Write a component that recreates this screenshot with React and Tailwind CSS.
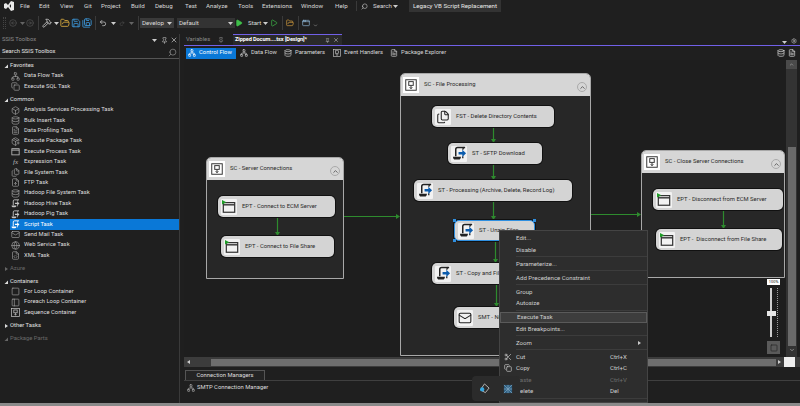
import React from "react";
import {
  AppWindow, Box, ChevronDown, ChevronUp, CircleArrowLeft, CircleArrowRight, Copy, Database, FileCode, FileText, Files,
  FileUp, FolderOpen, Globe, Hammer, Mail, Network, PackagePlus, PanelLeft, Pin, Play, Redo2, Save, SaveAll, Scissors,
  Search, Settings, Square, Undo2, X,
} from "lucide-react";

const MENU = [
  ["File", "w-[19px]"], ["Edit", "w-[21px]"], ["View", "w-[24px]"], ["Git", "w-[17px]"], ["Project", "w-[30px]"],
  ["Build", "w-[24px]"], ["Debug", "w-[30px]"], ["Test", "w-[21px]"], ["Analyze", "w-[32px]"], ["Tools", "w-[24px]"],
  ["Extensions", "w-[39px]"], ["Window", "w-[34px]"], ["Help", "w-[21px]"],
];

const Caret = ({ open = true, dim = false }) => (
  <svg width="6" height="6" viewBox="0 0 6 6" className="shrink-0">
    {open ? (
      <path d="M5 1.5V5H1.5z" fill={dim ? "#666" : "#ddd"} />
    ) : (
      <path d="M2 1l3 2-3 2z" fill={dim ? "#666" : "#ddd"} />
    )}
  </svg>
);

const Drop = () => (
  <svg width="5" height="4" viewBox="0 0 5 4" className="shrink-0"><path d="M0 1h5L2.5 4z" fill="#ccc" /></svg>
);

// fixed width slot so the toolbar icons keep their spacing
const Cell = ({ className, children }) => <div className={`flex shrink-0 items-center justify-center ${className}`}>{children}</div>;
const Rule = () => <div className="h-[14px] w-px bg-[#3a3a3a]" />;

// small versions of the SSIS task glyphs
const ScriptGlyph = ({ size = 9, color = "#c4c4c4", arrow = null }) => (
  <svg width={size} height={size} viewBox="0 0 16 16" fill="none" className="shrink-0">
    <path d="M4 11V3.5C4 2 5 1.5 6 1.5h8" stroke={color} strokeWidth="1.6" />
    <path d="M13 1.5C12 2 11.5 3 11.5 4" stroke={color} strokeWidth="1.4" />
    <path d="M1 11.5h8.5c0 2-1 3-2 3H3c-1 0-2-1-2-3z" fill={color} />
    <path d="M11.5 11v2" stroke={color} strokeWidth="1.4" />
    <path d="M7 6.5h4V4l4 3.8-4 3.8V9H7z" fill={arrow || color} />
  </svg>
);

const WindowGlyph = ({ size = 9, flag = false }) => (
  <svg width={size} height={size} viewBox="0 0 16 16" fill="none" className="shrink-0">
    <rect x="1.5" y="3" width="13" height="11" fill="none" stroke={flag ? "#333" : "#c4c4c4"} strokeWidth="1.4" />
    <path d="M1.5 5.5h13" stroke={flag ? "#333" : "#c4c4c4"} strokeWidth="1.6" />
    {flag && <path d="M0 0l5 2.5L0 5z" fill="#1f9d28" />}
  </svg>
);

const SeqGlyph = ({ size = 9, color = "#c4c4c4" }) => (
  <svg width={size} height={size} viewBox="0 0 16 16" fill="none" className="shrink-0">
    <rect x="1" y="1" width="14" height="14" stroke={color} strokeWidth="1.3" />
    <rect x="5" y="3.5" width="6" height="5" stroke={color} strokeWidth="1.3" />
    <path d="M8 9v3.5M6.3 11l1.7 2 1.7-2" stroke={color} strokeWidth="1.3" />
  </svg>
);

const FxGlyph = () => <span className="w-[9px] shrink-0 text-center font-['Liberation_Serif',serif] text-[7px] italic text-[#bbb]">fx</span>;

const li = (Icon) => () => <Icon size={9} color="#b4b4b4" strokeWidth={1.5} className="shrink-0" />;

const TOOLBOX = [
  { name: "Favorites", open: true, items: [["Data Flow Task", li(Network)], ["Execute SQL Task", li(Copy)]] },
  {
    name: "Common",
    open: true,
    items: [
      ["Analysis Services Processing Task", li(Box)],
      ["Bulk Insert Task", li(Database)],
      ["Data Profiling Task", li(FileText)],
      ["Execute Package Task", li(PackagePlus)],
      ["Execute Process Task", () => <WindowGlyph />],
      ["Expression Task", FxGlyph],
      ["File System Task", li(Files)],
      ["FTP Task", li(FileUp)],
      ["Hadoop File System Task", li(Database)],
      ["Hadoop Hive Task", () => <ScriptGlyph />],
      ["Hadoop Pig Task", () => <ScriptGlyph />],
      ["Script Task", () => <ScriptGlyph color="#fff" />],
      ["Send Mail Task", li(Mail)],
      ["Web Service Task", li(Globe)],
      ["XML Task", li(FileCode)],
    ],
  },
  { name: "Azure", open: false, dim: true, items: [] },
  {
    name: "Containers",
    open: true,
    items: [["For Loop Container", li(Square)], ["Foreach Loop Container", li(PanelLeft)], ["Sequence Container", () => <SeqGlyph />]],
  },
  { name: "Other Tasks", open: false, items: [] },
  { name: "Package Parts", open: true, dim: true, items: [] },
];

const Toolbox = () => (
  <div className="flex h-full w-[180px] shrink-0 flex-col border-r border-[#3a3a3a] text-[5.85px]">
    <div className="flex h-[12px] shrink-0 items-center pl-[2px] pr-[1px] text-[#8a8a8a]">
      <span className="flex-1">SSIS Toolbox</span>
      <Drop />
      <Pin size={7} className="ml-[4px]" color="#ccc" />
      <X size={8} className="ml-[2px]" color="#ccc" />
    </div>
    <div className="flex h-[13px] shrink-0 items-center border-b border-[#555] pl-[2px] pr-[2px] text-[#e4e4e4]">
      <span className="flex-1">Search SSIS Toolbox</span>
      <Search size={9} color="#888" className="-scale-x-100" />
    </div>
    <div className="pt-[1.8px]">
      {TOOLBOX.map((g, i) => (
        <div key={g.name} className={i === 0 ? "" : "mt-[2.6px]"}>
          <div className={`flex h-[10.4px] items-center gap-[1px] pl-[3px] ${g.dim ? "text-[#6a6a6a]" : "text-[#e0e0e0]"}`}>
            <Caret open={g.open} dim={g.dim} />
            <span>{g.name}</span>
          </div>
          {g.items.map(([label, Icon]) => (
            <div
              key={label}
              className={`ml-[10px] flex h-[10.4px] items-center gap-[4px] pl-[1px] ${label === "Script Task" ? "bg-[#0a78d7] text-white" : "text-[#dedede]"}`}
            >
              <span className="flex w-[9px] shrink-0 justify-center"><Icon /></span>
              <span>{label}</span>
            </div>
          ))}
        </div>
      ))}
    </div>
  </div>
);

const Container = ({ pos, title }) => (
  <div className={`absolute flex flex-col overflow-hidden rounded-t-[5px] border border-[#a8a8a8] bg-[#272727] ${pos}`}>
    <div className="flex h-[22px] shrink-0 items-center bg-[#d6d6d6] pl-[2px] pr-[3px] text-[#2a2a2a]">
      <span className="flex h-[16px] w-[16px] shrink-0 items-center justify-center bg-white"><SeqGlyph size={12} color="#333" /></span>
      <span className="ml-[5px] flex-1">{title}</span>
      <span className="mt-[4px] flex h-[10px] w-[10px] items-center justify-center rounded-full border border-[#aaa]">
        <ChevronUp size={7} color="#555" strokeWidth={3} />
      </span>
    </div>
  </div>
);

const NODE_ICON = {
  window: <WindowGlyph size={14} flag />,
  script: <ScriptGlyph size={15} color="#222" arrow="#0b5cad" />,
  files: <Files size={14} color="#222" strokeWidth={1.8} />,
  mail: <Mail size={14} color="#222" strokeWidth={1.8} />,
};

const NODES = [
  { pos: "left-[34px] top-[136px] w-[117px]", icon: "window", text: "EPT - Connect to ECM Server" },
  { pos: "left-[37px] top-[176px] w-[113px]", icon: "window", text: "EPT - Connect to File Share" },
  { pos: "left-[248px] top-[46px] w-[122px]", icon: "files", text: "FST - Delete Directory Contents" },
  { pos: "left-[264px] top-[83px] w-[94px]", icon: "script", text: "ST - SFTP Download" },
  { pos: "left-[230px] top-[120px] w-[158px]", icon: "script", text: "ST - Processing (Archive, Delete, Record Log)" },
  { pos: "left-[270px] top-[160px] w-[81px]", icon: "script", text: "ST - Unzip Files", selected: true },
  { pos: "left-[248px] top-[203px] w-[110px]", icon: "script", text: "ST - Copy and File" },
  { pos: "left-[270px] top-[247px] w-[100px]", icon: "mail", text: "SMT - Notify" },
  { pos: "left-[469px] top-[129px] w-[130px]", icon: "window", text: "EPT - Disconnect from ECM Server" },
  { pos: "left-[472px] top-[169px] w-[126px]", icon: "window", text: "EPT -  Disconnect from File Share" },
];

const Node = ({ pos, icon, text, selected }) => (
  <div
    className={`absolute flex h-[21px] items-center gap-[5px] whitespace-pre rounded-[5px] bg-[#d4d4d4] pl-[3px] text-[#2a2a2a] shadow-[0_0_0_1px_#111] ${pos} ${selected ? "border border-[#2f8fe0]" : ""}`}
  >
    <span className="flex h-[16px] w-[16px] shrink-0 items-center justify-center rounded-[1px] bg-[#f2f2f2]">{NODE_ICON[icon]}</span>
    <span>{text}</span>
    {selected && (
      <>
        <span className="absolute -left-[2px] -top-[2px] h-[3px] w-[3px] bg-[#2f8fe0]" />
        <span className="absolute -right-[2px] -top-[2px] h-[3px] w-[3px] bg-[#2f8fe0]" />
        <span className="absolute -bottom-[2px] -left-[2px] h-[3px] w-[3px] bg-[#2f8fe0]" />
        <span className="absolute -bottom-[2px] -right-[2px] h-[3px] w-[3px] bg-[#2f8fe0]" />
      </>
    )}
  </div>
);

const Arrows = () => {
  const stroke = "#2e8b2e";
  const down = [[93, 157, 176], [309, 68, 83], [309, 104, 120], [309, 141, 160], [311, 181, 203], [312, 224, 247], [539, 150, 169]];
  const right = [[160, 216, 156], [407, 457, 154]];
  return (
    <svg className="absolute inset-0" width="602" height="297">
      {down.map(([x, a, b]) => (
        <g key={`${x}-${a}`}>
          <path d={`M${x + 0.5} ${a}V${b - 3}`} stroke={stroke} strokeWidth="1.2" />
          <path d={`M${x - 2} ${b - 4}h5l-2.5 4z`} fill={stroke} />
        </g>
      ))}
      {right.map(([a, b, y]) => (
        <g key={a}>
          <path d={`M${a} ${y + 0.5}H${b - 3}`} stroke={stroke} strokeWidth="1.2" />
          <path d={`M${b - 4} ${y - 2}v5l4-2.5z`} fill={stroke} />
        </g>
      ))}
    </svg>
  );
};

const ZoomControl = () => (
  <div className="absolute left-[583px] top-[219px] flex w-[13px] flex-col items-center">
    <div className="h-[6px] w-[13px] bg-white text-center text-[4px] leading-[6px] text-[#222]">100%</div>
    <div className="relative mt-[3px] h-[49px] w-[13px]">
      <div className="absolute left-[3px] top-0 h-full w-[2px] bg-[#cfcfcf]" />
      <div className="absolute left-[10px] top-0 h-full w-[1px] border-l border-dotted border-[#999]" />
      <div className="absolute left-0 top-[23px] h-[5px] w-[9px] bg-[#e6e6e6]" />
    </div>
    <div className="mt-[4px] flex h-[13px] w-[13px] items-center justify-center bg-[#5a5a5a]">
      <Square size={8} color="#222" strokeWidth={2} />
    </div>
  </div>
);

const MENU_ITEMS = [
  "Edit...", "Disable", "-", "Parameterize...", "-", "Add Precedence Constraint", "-", "Group", "Autosize", "-",
  "Execute Task", "Edit Breakpoints...", "-", "Zoom", "-", "Cut", "Copy", "Paste", "Delete", "-",
];
const KEYS = { Cut: "Ctrl+X", Copy: "Ctrl+C", Paste: "Ctrl+V", Delete: "Del" };

const ContextMenu = () => (
  <div className="absolute left-[499px] top-[230px] h-[173px] w-[149px] overflow-hidden border border-[#444] bg-[#2d2d2d] pt-[1.5px] text-[6.1px] text-[#cfcfcf]">
    {MENU_ITEMS.map((m, i) =>
      m === "-" ? (
        <div key={i} className="flex h-[2.5px] items-center pl-[16px]"><div className="h-px w-full bg-[#3c3c3c]" /></div>
      ) : (
        <div
          key={m}
          className={`relative flex h-[11.5px] items-center pl-[16px] pr-[6px] ${m === "Execute Task" ? "border border-[#5a5a5a] bg-[#3d3d3d]" : ""} ${m === "Paste" ? "text-[#6d6d6d]" : ""}`}
        >
          {m === "Cut" && <Scissors size={8} className="absolute left-[4px]" color="#ccc" />}
          {m === "Copy" && <Copy size={8} className="absolute left-[4px]" color="#ccc" />}
          <span className="flex-1">{m}</span>
          {KEYS[m] && <span className="w-[31px]">{KEYS[m]}</span>}
          {m === "Zoom" && <span className="h-0 w-0 border-y-[2px] border-l-[3px] border-y-transparent border-l-[#ccc]" />}
        </div>
      )
    )}
  </div>
);

const FloatBar = () => (
  <div className="absolute left-[472px] top-[376px] flex h-[25px] w-[48px] items-center justify-around rounded-[4px] bg-[#2b2b2b]">
    <svg width="11" height="11" viewBox="0 0 12 12" fill="none">
      <path d="M6 1l5 4.5-4 5-5.5-3z" stroke="#bbb" strokeWidth="1" />
      <circle cx="3.5" cy="7" r="2.3" fill="#35a7e0" />
    </svg>
    <svg width="10" height="10" viewBox="0 0 11 11">
      <path d="M1 1h9v9H1z" fill="#2f5f80" />
      <path d="M1 1l9 9M10 1l-9 9M1 5.5h9M5.5 1v9" stroke="#7fa6bf" strokeWidth="0.8" />
    </svg>
  </div>
);

const TabItem = ({ icon, label, className }) => (
  <div className={`flex h-[11px] items-center gap-[3px] pl-[1px] text-[#d6d6d6] ${className}`}>
    {icon}
    <span>{label}</span>
  </div>
);

export default function App() {
  return (
    <div className="relative flex h-[406px] w-[800px] flex-col overflow-hidden bg-[#1f1f1f] font-['Roboto',sans-serif] text-[6.2px] leading-none">
      {/* menu bar */}
      <div className="flex h-[12px] shrink-0 items-center text-[#d8d8d8]">
        <svg width="11" height="10" viewBox="0 0 11 10" className="ml-[3px] mr-[6px] shrink-0">
          <path d="M1 3l2-1 2 2 3-4 3 1v8l-3 1-3-4-2 2-2-1z" fill="#e8e8e8" />
          <path d="M8 3L6.5 5 8 7z" fill="#1f1f1f" />
        </svg>
        {MENU.map(([m, w]) => (
          <span key={m} className={`shrink-0 ${w}`}>{m}</span>
        ))}
        <div className="h-[10px] w-px bg-[#3a3a3a]" />
        <Search size={7} color="#ccc" className="ml-[4px] -scale-x-100" />
        <span className="ml-[5px] w-[20px] shrink-0">Search</span>
        <Drop />
        <div className="ml-[11px] flex h-[12px] w-[92px] items-center justify-center bg-[#333] text-[#e8e8e8]">Legacy VB Script Replacement</div>
      </div>

      {/* standard toolbar */}
      <div className="flex h-[22px] shrink-0 items-center pl-[3px]">
        <div className="mr-[2px] h-[12px] w-[3px] border-x border-dotted border-[#444]" />
        <Cell className="w-[10px]"><CircleArrowLeft size={8} color="#555" /></Cell>
        <Cell className="w-[8px] opacity-40"><Drop /></Cell>
        <Cell className="w-[8px]"><CircleArrowRight size={8} color="#555" /></Cell>
        <Cell className="w-[8px]"><Rule /></Cell>
        <Cell className="w-[10px]"><Hammer size={10} color="#ccc" /></Cell>
        <Cell className="w-[8px]"><Drop /></Cell>
        <Cell className="w-[10px]"><FolderOpen size={10} color="#e0b040" /></Cell>
        <Cell className="w-[12px]"><Save size={10} color="#3d9be0" /></Cell>
        <Cell className="w-[10px]"><SaveAll size={10} color="#3d9be0" /></Cell>
        <Cell className="w-[7px]"><Rule /></Cell>
        <Cell className="w-[8px]"><Undo2 size={10} color="#ddd" /></Cell>
        <Cell className="w-[12px]"><Drop /></Cell>
        <Cell className="w-[6px]"><Redo2 size={9} color="#555" /></Cell>
        <Cell className="w-[12px] opacity-40"><Drop /></Cell>
        <Cell className="w-[3px]"><Rule /></Cell>
        <div className="flex h-[10px] w-[34px] shrink-0 items-center justify-between bg-[#3a3a3a] px-[2px] text-[#ddd]">Develop<Drop /></div>
        <div className="ml-[3px] flex h-[10px] w-[58px] shrink-0 items-center justify-between bg-[#333] px-[2px] text-[#ddd]">Default<Drop /></div>
        <Cell className="w-[8px]"><Play size={8} color="#3fbf4a" fill="#3fbf4a" /></Cell>
        <span className="ml-[5px] w-[12px] shrink-0 text-[#ddd]">Start</span>
        <Cell className="w-[10px]"><Drop /></Cell>
        <Cell className="w-[8px]"><Play size={8} color="#3fbf4a" /></Cell>
        <Cell className="w-[8px]"><Rule /></Cell>
        <Cell className="w-[8px]"><FolderOpen size={10} color="#d8a040" /></Cell>
        <Cell className="w-[8px]"><Rule /></Cell>
        <Cell className="w-[8px]"><AppWindow size={10} color="#8fb8d8" /></Cell>
        <Cell className="w-[10px]"><ChevronDown size={5} color="#ccc" className="mt-[4px]" /></Cell>
      </div>

      <div className="flex min-h-0 flex-1">
        <Toolbox />
        <div className="w-[3px] shrink-0" />
        {/* designer */}
        <div className="flex min-w-0 flex-1 flex-col pl-px text-[5.85px]">
          <div className="flex h-[11px] shrink-0 items-stretch">
            <div className="flex w-[49px] items-center gap-[3px] pl-[2px] text-[#8a8a8a]">
              <span className="w-[29px]">Variables</span>
              <Pin size={6} color="#999" />
            </div>
            <div className="flex w-[109px] items-center border-t border-[#7160e8] bg-[#2a2a2a] pl-[2px] pr-[3px] text-white">
              <span className="w-[90px] shrink-0 whitespace-nowrap text-[5.6px] font-bold tracking-[-0.1px]">Zipped Docum....tsx [Design]*</span>
              <Pin size={5} color="#ccc" className="mr-[3px] shrink-0" />
              <X size={6} color="#ccc" className="shrink-0" />
            </div>
            <div className="flex flex-1 items-end justify-end gap-[4px] pb-[1px] pr-[3px]">
              <Drop />
              <Settings size={6} color="#ccc" />
            </div>
          </div>
          <div className="h-px shrink-0 bg-[#7160e8]" />
          <div className="flex h-[14px] shrink-0 items-center pl-[2px] pr-[4px]">
            <TabItem className="w-[50px] bg-[#0a78d7] pl-[2px] !text-white" icon={<Network size={8} color="#fff" />} label="Control Flow" />
            <TabItem className="ml-[3px] w-[44px]" icon={<Network size={8} color="#ccc" />} label="Data Flow" />
            <TabItem className="w-[49px]" icon={<Database size={8} color="#ccc" />} label="Parameters" />
            <TabItem className="w-[57px]" icon={<SeqGlyph size={8} />} label="Event Handlers" />
            <TabItem className="flex-1" icon={<FileText size={8} color="#ccc" />} label="Package Explorer" />
            <Database size={8} color="#ddd" />
            <FileText size={8} color="#ddd" className="ml-[3px]" />
          </div>

          <div className="flex h-[297px] shrink-0">
            <div className="relative h-full w-[602px] shrink-0 bg-[#1e1e1e]">
              <Container pos="left-[22px] top-[97px] h-[122px] w-[138px]" title="SC - Server Connections" />
              <Container pos="left-[216px] top-[13px] h-[283px] w-[191px]" title="SC - File Processing" />
              <Container pos="left-[457px] top-[90px] h-[128px] w-[144px]" title="SC - Close Server Connections" />
              <Arrows />
              {NODES.map((n) => <Node key={n.text} {...n} />)}
              <ZoomControl />
            </div>
            <div className="flex h-full w-[11px] shrink-0 flex-col items-center bg-[#333]">
              <div className="flex h-[9px] w-full items-center justify-center bg-[#4a4a4a]"><ChevronUp size={5} color="#ddd" /></div>
              <div className="mt-[78px] h-[199px] w-[8px] bg-[#6a6a6a]" />
              <ChevronDown size={6} color="#ddd" className="mt-[1px]" />
            </div>
          </div>

          <div className="flex h-[10px] shrink-0 items-center bg-[#3c3c3c]">
            <span className="ml-[3px] h-0 w-0 border-y-[2px] border-r-[3px] border-y-transparent border-r-[#ccc]" />
            <div className="ml-[21px] h-[7px] w-[565px] bg-[#6e6e6e]" />
            <span className="ml-[2px] h-0 w-0 border-y-[2px] border-l-[3px] border-y-transparent border-l-[#ccc]" />
            <div className="ml-[3px] h-[10px] w-[11px] bg-[#eee]" />
          </div>

          <div className="mt-[3px] flex h-[10px] shrink-0 items-end">
            <div className="ml-[1px] flex h-[10px] w-[80px] items-center justify-center border border-b-0 border-[#555] bg-[#242424] text-[#ddd]">Connection Managers</div>
          </div>
          <div className="min-h-0 flex-1 border-t border-[#3f3f3f] pl-[3px] pt-[3px] text-[#ddd]">
            <div className="flex items-center gap-[2px]">
              <Network size={8} color="#aaa" />
              <span>SMTP Connection Manager</span>
            </div>
          </div>
        </div>
      </div>

      <div className="h-[3px] shrink-0 bg-[#8a8a8a]" />
      <ContextMenu />
      <FloatBar />
    </div>
  );
}
